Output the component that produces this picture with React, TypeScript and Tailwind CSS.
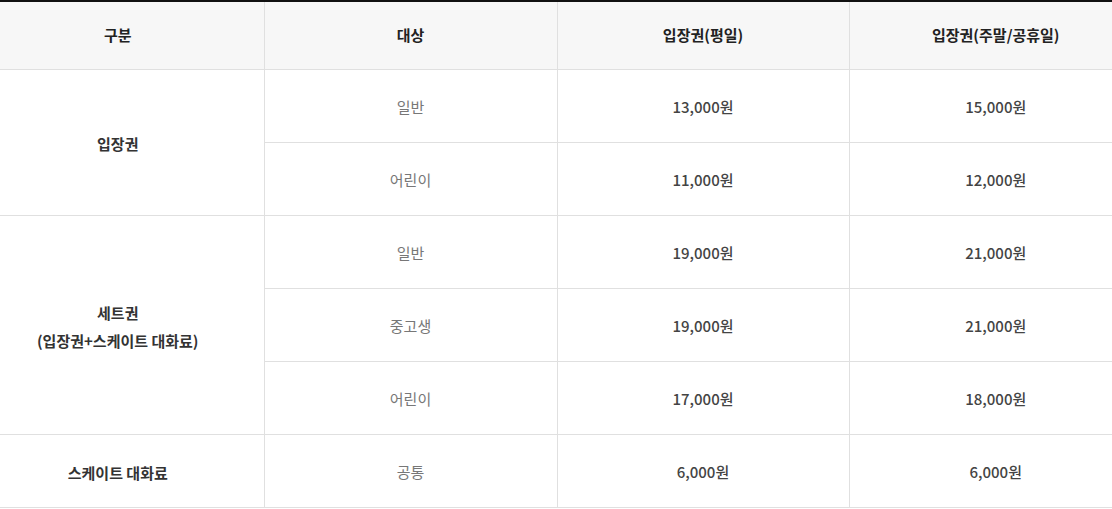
const headers = ['구분', '대상', '입장권(평일)', '입장권(주말/공휴일)'];

type Row = { target: string; weekday: string; weekend: string };
type Group = { label: string[]; rows: Row[] };

const groups: Group[] = [
  {
    label: ['입장권'],
    rows: [
      { target: '일반', weekday: '13,000원', weekend: '15,000원' },
      { target: '어린이', weekday: '11,000원', weekend: '12,000원' },
    ],
  },
  {
    label: ['세트권', '(입장권+스케이트 대화료)'],
    rows: [
      { target: '일반', weekday: '19,000원', weekend: '21,000원' },
      { target: '중고생', weekday: '19,000원', weekend: '21,000원' },
      { target: '어린이', weekday: '17,000원', weekend: '18,000원' },
    ],
  },
  {
    label: ['스케이트 대화료'],
    rows: [{ target: '공통', weekday: '6,000원', weekend: '6,000원' }],
  },
];

export default function App() {
  return (
    <div className="w-[1112px] h-[509px] overflow-hidden bg-white font-['Noto_Sans_CJK_KR','Noto_Sans',sans-serif] text-[15px]">
      {/* page is a crop of a wider table, shifted left */}
      <table className="w-[1170px] -ml-[28px] border-collapse table-fixed border-t-2 border-t-[#111]">
        <colgroup>
          <col className="w-[292px]" />
          <col className="w-[293px]" />
          <col className="w-[292px]" />
          <col className="w-[293px]" />
        </colgroup>
        <thead>
          <tr className="h-[68px] bg-[#f7f7f7]">
            {headers.map((h, i) => (
              <th
                key={h}
                className={`font-bold text-[#222] text-center border-b border-[#e0e0e0] ${i > 0 ? 'border-l' : ''}`}
              >
                {h}
              </th>
            ))}
          </tr>
        </thead>
        <tbody>
          {groups.map((g) =>
            g.rows.map((r, i) => (
              <tr key={g.label[0] + i} className="h-[73px]">
                {i === 0 && (
                  <td
                    rowSpan={g.rows.length}
                    className="pt-1 text-center font-bold text-[#333] leading-[28px] border-b border-[#e0e0e0]"
                  >
                    {g.label.map((l) => (
                      <div key={l}>{l}</div>
                    ))}
                  </td>
                )}
                <td className="pt-1 text-center text-[#777] border-l border-b border-[#e0e0e0]">{r.target}</td>
                <td className="pt-1 text-center font-medium text-[#444] border-l border-b border-[#e0e0e0]">{r.weekday}</td>
                <td className="pt-1 text-center font-medium text-[#444] border-l border-b border-[#e0e0e0]">{r.weekend}</td>
              </tr>
            ))
          )}
        </tbody>
      </table>
    </div>
  );
}
